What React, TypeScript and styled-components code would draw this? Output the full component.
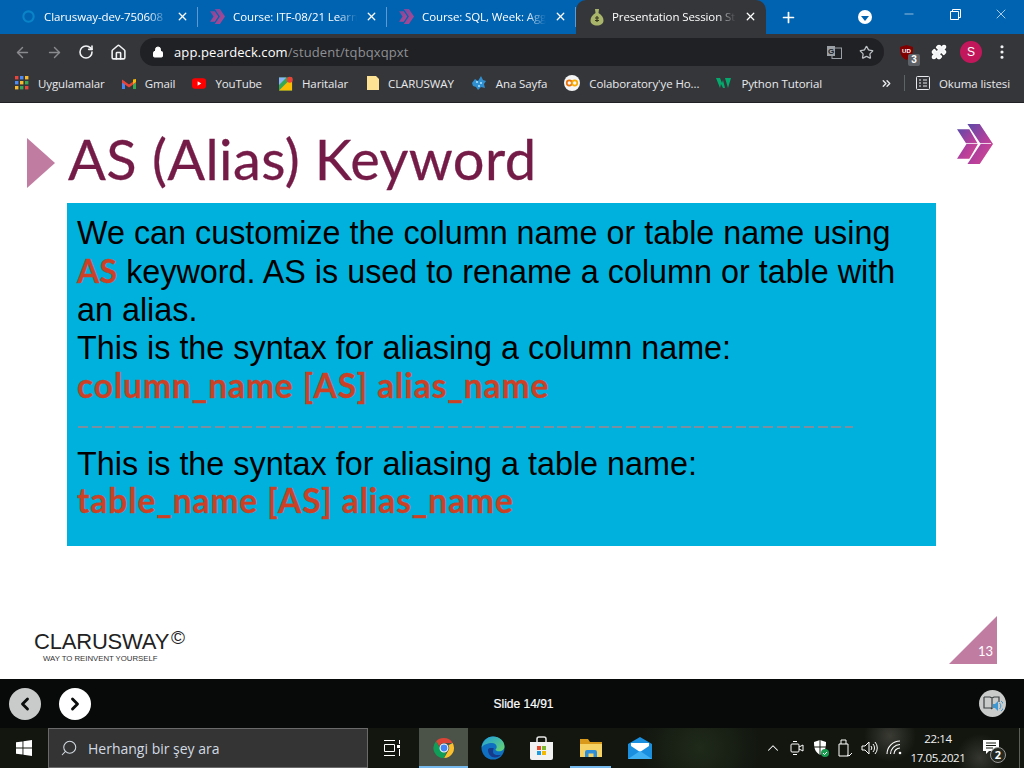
import React from 'react';
import styled, { createGlobalStyle } from 'styled-components';
import { ArrowLeft, ArrowRight, RotateCw, Home, Lock, Star, Puzzle, X, Plus, Minus, Search, ChevronLeft, ChevronRight, ChevronUp, ChevronsRight, MoreVertical } from 'lucide-react';

const Global = createGlobalStyle`
  html, body { margin: 0; padding: 0; background: #fff; }
  * { box-sizing: border-box; }
  body { font-family: "Liberation Sans", Arial, sans-serif; overflow: hidden; }
`;

const Screen = styled.div`
  width: 1024px;
  height: 768px;
  display: flex;
  flex-direction: column;
  overflow: hidden;
`;

const TabStrip = styled.div`
  height: 34px;
  background: #0063b1;
  display: flex;
  align-items: flex-end;
  padding-left: 9px;
  flex: none;
`;

const Tab = styled.div<{ $active?: boolean }>`
  width: ${({ $active }) => ($active ? '190px' : '188px')};
  height: 34px;
  display: flex;
  align-items: center;
  padding: ${({ $active }) => ($active ? '0 9px 1px 14px' : '0 8px 1px 12px')};
  gap: 8px;
  color: #fff;
  font-family: "Open Sans", sans-serif;
  font-size: 11.5px;
  letter-spacing: -0.1px;
  background: ${({ $active }) => ($active ? '#35363a' : 'transparent')};
  border-radius: ${({ $active }) => ($active ? '10px 10px 0 0' : '0')};
`;

const TabDivider = styled.div`
  width: 1px;
  height: 20px;
  background: #5c9ad0;
  margin-bottom: 7px;
  flex: none;
`;

const TabTitle = styled.span`
  flex: 1;
  min-width: 0;
  overflow: hidden;
  white-space: nowrap;
  -webkit-mask-image: linear-gradient(to right, #000 84%, transparent);
  mask-image: linear-gradient(to right, #000 84%, transparent);
`;

const NewTab = styled.div`
  width: 44px;
  height: 34px;
  display: flex;
  align-items: center;
  justify-content: center;
  color: #fff;
`;

const Spacer = styled.div`
  flex: 1;
`;

const WindowButton = styled.div`
  width: 46px;
  height: 28px;
  align-self: flex-start;
  display: flex;
  align-items: center;
  justify-content: center;
  color: #fff;
`;

const ProfileDrop = styled.div`
  width: 14px;
  height: 14px;
  border-radius: 50%;
  background: #fff;
  display: flex;
  align-items: center;
  justify-content: center;
  margin-right: 14px;
  align-self: center;
  &::after {
    content: '';
    border-left: 4px solid transparent;
    border-right: 4px solid transparent;
    border-top: 5px solid #0063b1;
    margin-top: 2px;
  }
`;

const Toolbar = styled.div`
  height: 36px;
  background: #35363a;
  display: flex;
  align-items: center;
  padding: 0 0 0 14px;
  color: #fff;
  flex: none;
`;

const NavIcon = styled.div<{ $dim?: boolean }>`
  width: 32px;
  height: 24px;
  display: flex;
  align-items: center;
  color: ${({ $dim }) => ($dim ? '#8a8b8e' : '#f1f3f4')};
`;

const Omnibox = styled.div`
  width: 744px;
  height: 28px;
  margin-left: -2px;
  border-radius: 14px;
  background: #202124;
  display: flex;
  align-items: center;
  padding: 0 10px 0 12px;
  font-family: "Open Sans", sans-serif;
  font-size: 13px;
  color: #fff;
`;

const Url = styled.span`
  margin-left: 10px;
  letter-spacing: 0.1px;
  span {
    color: #8f9094;
  }
`;

const Translate = styled.div`
  margin-right: 17px;
  display: flex;
`;

const ExtensionRow = styled.div`
  display: flex;
  align-items: center;
  margin-left: 15px;
`;

const UBlock = styled.div`
  width: 26px;
  height: 24px;
  position: relative;
  margin-right: 6px;
  display: flex;
  align-items: center;
`;

const Badge = styled.span`
  position: absolute;
  right: 5px;
  bottom: -2px;
  width: 12px;
  height: 12px;
  background: #5f6368;
  border-radius: 2px;
  color: #fff;
  font-size: 10px;
  font-weight: bold;
  line-height: 12px;
  text-align: center;
`;

const Avatar = styled.div`
  width: 22px;
  height: 22px;
  border-radius: 50%;
  background: #c2185b;
  color: #fff;
  font-size: 12px;
  margin-left: 13px;
  display: flex;
  align-items: center;
  justify-content: center;
`;

const MenuDots = styled.div`
  margin-left: 11px;
  display: flex;
  color: #f1f3f4;
`;

const Bookmarks = styled.div`
  height: 33px;
  background: #35363a;
  border-bottom: 1px solid #202124;
  display: flex;
  align-items: center;
  padding: 0 0 6px 15px;
  color: #e8eaed;
  font-family: "Open Sans", sans-serif;
  font-size: 11.5px;
  letter-spacing: -0.1px;
  flex: none;
`;

const Bookmark = styled.div<{ $gap: number }>`
  display: flex;
  align-items: center;
  gap: 9px;
  margin-right: ${({ $gap }) => $gap}px;
  white-space: nowrap;
`;

const BarDivider = styled.div`
  width: 1px;
  height: 16px;
  background: #5f6368;
  margin: 0 11px;
`;

const Slide = styled.main`
  flex: 1;
  background: #fff;
  display: flex;
  flex-direction: column;
  padding: 0 27px 15px 27px;
  min-height: 0;
`;

const TitleRow = styled.div`
  height: 100px;
  display: flex;
  align-items: center;
  padding-top: 12px;
`;

const TitleArrow = styled.div`
  width: 0;
  height: 0;
  border-top: 25px solid transparent;
  border-bottom: 25px solid transparent;
  border-left: 28px solid #c17ca2;
  margin-top: 8px;
  flex: none;
`;

const Title = styled.h1`
  margin: 0 0 0 13px;
  font-family: Lato, sans-serif;
  font-weight: 400;
  font-size: 56px;
  line-height: 64px;
  color: #741b47;
  letter-spacing: 0.42px;
  -webkit-text-stroke: 0.3px #741b47;
  white-space: nowrap;
`;

const LogoMark = styled.svg`
  margin-left: auto;
  margin-right: 4px;
  margin-top: -31px;
  flex: none;
`;

const Panel = styled.section`
  width: 869px;
  height: 343px;
  margin-left: 40px;
  background: #00b1dd;
  padding: 11.2px 10px 0;
  font-size: 32.33px;
  line-height: 38.4px;
  color: #000;
`;

const Line = styled.div`
  white-space: nowrap;
`;

const Red = styled.span<{ $lead?: boolean }>`
  color: #cc4125;
  font-family: Lato, sans-serif;
  font-weight: 700;
  font-size: ${({ $lead }) => ($lead ? '32px' : '33.5px')};
  line-height: 0;
  letter-spacing: ${({ $lead }) => ($lead ? '0.2px' : '0.9px')};
  -webkit-text-stroke: 0.3px #cc4125;
`;

const Rule = styled.div`
  height: 38.4px;
  display: flex;
  align-items: center;
  padding-left: 1px;
  &::after {
    content: '';
    width: 775px;
    height: 2px;
    margin-top: 3px;
    background: repeating-linear-gradient(to right, #7d8e9e 0 10px, transparent 10px 13.7px);
  }
`;

const SlideFooter = styled.div`
  margin-top: auto;
  display: flex;
  align-items: flex-end;
  justify-content: space-between;
`;

const Brand = styled.div`
  margin: 0 0 0 7px;
  color: #222;
`;

const BrandName = styled.div`
  font-family: "Liberation Sans", sans-serif;
  font-size: 22px;
  line-height: 24px;
  letter-spacing: -0.2px;
  position: relative;
  top: 1px;
  sup {
    font-size: 19px;
    line-height: 0;
    vertical-align: 5px;
    margin-left: 2px;
    font-weight: 400;
  }
`;

const BrandTag = styled.div`
  font-size: 7.8px;
  line-height: 11px;
  margin-left: 9px;
  color: #333;
  letter-spacing: -0.02px;
`;

const PageTriangle = styled.div`
  width: 48px;
  height: 48px;
  background: #c17ca2;
  clip-path: polygon(100% 0, 100% 100%, 0 100%);
  display: flex;
  align-items: flex-end;
  justify-content: flex-end;
  color: #fff;
  font-family: Lato, sans-serif;
  font-size: 13px;
  line-height: 26px;
  padding-right: 4px;
`;

const PlayerBar = styled.div`
  height: 49px;
  background: #080a0a;
  display: flex;
  align-items: center;
  padding: 0 18px 0 9px;
  color: #fff;
  font-size: 12px;
  flex: none;
`;

const RoundButton = styled.div<{ $muted?: boolean }>`
  width: 32px;
  height: 32px;
  border-radius: 50%;
  background: ${({ $muted }) => ($muted ? '#c9cbcb' : '#fff')};
  color: #0b0d0d;
  display: flex;
  align-items: center;
  justify-content: center;
  margin-right: 18px;
  flex: none;
`;

const SlideCount = styled.div`
  flex: 1;
  margin-right: 41px;
  padding-top: 1px;
  line-height: 15px;
  text-align: center;
  font-size: 12px;
  -webkit-text-stroke: 0.2px #fff;
`;

const ReadButton = styled.div`
  width: 27px;
  height: 27px;
  border-radius: 50%;
  background: #c9cbcb;
  display: flex;
  align-items: center;
  justify-content: center;
`;

const Taskbar = styled.div`
  height: 40px;
  background:
    radial-gradient(circle at 890px 8px, #3a3c34 0, transparent 26px),
    radial-gradient(circle at 980px 30px, #34362f 0, transparent 24px),
    radial-gradient(circle at 700px 20px, #1f2a1a 0, transparent 60px),
    #12160f;
  display: flex;
  align-items: center;
  color: #fff;
  font-family: "Open Sans", sans-serif;
  flex: none;
`;

const StartButton = styled.div`
  width: 48px;
  height: 40px;
  display: flex;
  align-items: center;
  justify-content: center;
`;

const SearchBox = styled.div`
  width: 320px;
  height: 40px;
  background: #343434;
  border: 1px solid #6a6a6a;
  display: flex;
  align-items: center;
  padding-left: 11px;
  gap: 10px;
  color: #d2dae2;
  font-size: 14px;
`;

const SearchGlass = styled(Search)`
  transform: scaleX(-1);
`;

const TaskItem = styled.div<{ $active?: boolean; $running?: boolean; $wide?: boolean }>`
  width: ${({ $wide }) => ($wide ? '51px' : '49px')};
  height: 40px;
  display: flex;
  align-items: center;
  justify-content: center;
  padding-right: ${({ $wide }) => ($wide ? '3px' : '0')};
  background: ${({ $active }) => ($active ? '#4b5247' : 'transparent')};
  position: relative;
  &::after {
    content: '';
    display: ${({ $active, $running }) => ($active || $running ? 'block' : 'none')};
    position: absolute;
    bottom: 0;
    left: ${({ $running }) => ($running ? '4px' : '0')};
    right: ${({ $running }) => ($running ? '4px' : '0')};
    height: 2px;
    background: #76b9ed;
  }
`;

const Tray = styled.div`
  margin-left: auto;
  display: flex;
  align-items: center;
  height: 40px;
`;

const TrayIcon = styled.div<{ $w: number }>`
  width: ${({ $w }) => $w}px;
  display: flex;
  align-items: center;
  justify-content: center;
`;

const Clock = styled.div`
  width: 64px;
  text-align: center;
  font-size: 11.5px;
  letter-spacing: -0.35px;
  line-height: 19px;
  color: #f2f2f2;
`;

const Notify = styled.div`
  width: 42px;
  height: 40px;
  position: relative;
  display: flex;
  align-items: center;
  justify-content: center;
  padding-bottom: 3px;
`;

const NotifyCount = styled.span`
  position: absolute;
  right: 6px;
  bottom: 5px;
  width: 16px;
  height: 16px;
  border-radius: 50%;
  border: 1px solid #999;
  background: #26291f;
  color: #fff;
  font-size: 11px;
  font-weight: bold;
  line-height: 14px;
  text-align: center;
`;

const DesktopEdge = styled.div`
  width: 1px;
  height: 40px;
  background: #5c5f58;
  margin: 0 4px 0 7px;
`;

const PurpleChevrons = () => (
  <svg width="15" height="15" viewBox="0 0 38 38">
    <defs>
      <linearGradient id="chev" x1="0" y1="0" x2="1" y2="1">
        <stop offset="0" stopColor="#7a4aa0" />
        <stop offset="1" stopColor="#b4478f" />
      </linearGradient>
    </defs>
    <path d="M0 6h12l9 13-9 13H0l9-13z" fill="url(#chev)" />
    <path d="M12 0h13l13 19-13 19H12l13-19z" fill="url(#chev)" />
  </svg>
);

const ChromeLogo = () => (
  <svg width="22" height="22" viewBox="0 0 24 24">
    <path d="M12 1a11 11 0 0 1 9.500 5.500H12a5.500 5.500 0 0 0-5.200 3.700L3.400 4.600A11 11 0 0 1 12 1z" fill="#db4437" />
    <path d="M21.500 6.500A11 11 0 0 1 12 23l4.700-8.100A5.500 5.500 0 0 0 16.800 9z" fill="#fbc02d" />
    <path d="M12 23A11 11 0 0 1 3.400 4.600l4.700 8.400a5.500 5.500 0 0 0 6.500 3.800z" fill="#0f9d58" />
    <circle cx="12" cy="12" r="4.300" fill="#4285f4" stroke="#fff" strokeWidth="1.200" />
  </svg>
);

const EdgeLogo = () => (
  <svg width="24" height="24" viewBox="0 0 24 24">
    <defs>
      <linearGradient id="edgeTop" x1="0" y1="0" x2="1" y2="1">
        <stop offset="0" stopColor="#1b9de2" />
        <stop offset="1" stopColor="#6ad66a" />
      </linearGradient>
    </defs>
    <circle cx="12" cy="12" r="11.500" fill="#0f6fc0" />
    <path d="M.6 11.500C1.500 5 6.500.5 12 .5c6.500 0 11.500 4.500 11.500 10 0 3-2.500 4.800-5.500 4.800-2 0-3.500-.6-3.500-1.500 0-.8 1.200-1 1.200-2.800C15.700 8.500 13.500 7 11 7c-4 0-8.500 1.500-10.400 4.500z" fill="url(#edgeTop)" />
    <path d="M7 14c0 4 3 7.500 7 7.500 2.500 0 4.500-1 6-2.800-3 .8-8 .5-8-3 0-2 1-3.200 1-3.200-3-1-6-.5-6 1.500z" fill="#173a8a" />
  </svg>
);

const StoreLogo = () => (
  <svg width="23" height="24" viewBox="0 0 23 24">
    <path d="M7 6V3a2 2 0 0 1 2-2h5a2 2 0 0 1 2 2v3" fill="none" stroke="#e6e6e6" strokeWidth="1.500" />
    <path d="M0 6h23v16a2 2 0 0 1-2 2H2a2 2 0 0 1-2-2z" fill="#f2f2f2" />
    <rect x="7" y="10" width="4" height="4" fill="#e74c2e" />
    <rect x="12" y="10" width="4" height="4" fill="#7cb82f" />
    <rect x="7" y="15" width="4" height="4" fill="#1f9be0" />
    <rect x="12" y="15" width="4" height="4" fill="#f5b800" />
  </svg>
);

const FolderLogo = () => (
  <svg width="22" height="18" viewBox="0 0 22 18">
    <path d="M0 0h8l2 3h12v15H0z" fill="#d99a1c" />
    <path d="M0 5h22v13H0z" fill="#f6d265" />
    <path d="M5 18v-5a2 2 0 0 1 2-2h8a2 2 0 0 1 2 2v5h-3.500v-3.500h-5V18z" fill="#2f8ed8" />
  </svg>
);

const MailLogo = () => (
  <svg width="24" height="22" viewBox="0 0 24 22">
    <path d="M0 7l12-7 12 7v15H0z" fill="#1a8fe0" />
    <path d="M3 6h18v3l-9 6-9-6z" fill="#fff" />
    <path d="M0 22l12-8 12 8z" fill="#3fb0f2" />
  </svg>
);

const PearIcon = () => (
  <svg width="14" height="18" viewBox="0 0 14 18">
    <path d="M5 1h4L8.500 5c3 1.500 5 4.500 5 7.500 0 3.500-3 5-6.500 5s-6.500-1.500-6.500-5C.5 9.500 2.500 6.500 5.500 5z" fill="#a9b56a" />
    <path d="M7 8v6M5 10h4M5 12.500h4" stroke="#37391f" strokeWidth="1.200" />
  </svg>
);

const WifiIcon = () => (
  <svg width="16" height="16" viewBox="0 0 16 16">
    <g transform="translate(16 0) scale(-1 1)">
      <circle cx="2" cy="13" r="1.300" fill="#fff" />
      <path d="M2 8a6 6 0 0 1 6 6M2 4.500a9.500 9.500 0 0 1 9.500 9.500M2 1a13 13 0 0 1 13 13" fill="none" stroke="#fff" strokeWidth="1.100" />
    </g>
  </svg>
);

const appColors = ['#e8453c', '#4c8bf5', '#f9bb2d', '#3aa757'];

const tabs = [
  { title: 'Clarusway-dev-750608', icon: <svg width="15" height="15" viewBox="0 0 16 16"><circle cx="8" cy="8" r="5.500" fill="none" stroke="#0a84c9" strokeWidth="2.200" /></svg> },
  { title: 'Course: ITF-08/21 Learn', icon: <PurpleChevrons /> },
  { title: 'Course: SQL, Week: Agg', icon: <PurpleChevrons /> },
];

function App(): JSX.Element {
  return (
    <Screen>
      <Global />
      <TabStrip>
        {tabs.map((t) => (
          <React.Fragment key={t.title}>
            <Tab>
              {t.icon}
              <TabTitle>{t.title}</TabTitle>
              <X size={13} strokeWidth={2.4} />
            </Tab>
            <TabDivider />
          </React.Fragment>
        ))}
        <Tab $active>
          <PearIcon />
          <TabTitle>Presentation Session St</TabTitle>
          <X size={13} strokeWidth={2.4} />
        </Tab>
        <NewTab>
          <Plus size={17} strokeWidth={2.4} />
        </NewTab>
        <Spacer />
        <ProfileDrop />
        <WindowButton><Minus size={14} strokeWidth={1} /></WindowButton>
        <WindowButton>
          <svg width="11" height="11" viewBox="0 0 11 11" fill="none" stroke="#fff">
            <path d="M.5 2.500h8v8h-8zM2.500 2.500v-2h8v8h-2" />
          </svg>
        </WindowButton>
        <WindowButton><X size={16} strokeWidth={1} /></WindowButton>
      </TabStrip>

      <Toolbar>
        <NavIcon $dim><ArrowLeft size={17} /></NavIcon>
        <NavIcon $dim><ArrowRight size={17} /></NavIcon>
        <NavIcon><RotateCw size={16} strokeWidth={2.4} /></NavIcon>
        <NavIcon><Home size={17} strokeWidth={2.2} /></NavIcon>
        <Omnibox>
          <Lock size={12} fill="#fff" />
          <Url>app.peardeck.com<span>/student/tqbqxqpxt</span></Url>
          <Spacer />
          <Translate>
            <svg width="15" height="13" viewBox="0 0 15 13">
              <rect x="5" y="2" width="9.500" height="10.500" fill="none" stroke="#9aa0a6" />
              <rect width="8" height="10" fill="#9aa0a6" />
              <text x="4" y="8" fontSize="8" fontWeight="bold" textAnchor="middle" fill="#202124" fontFamily="Liberation Sans">G</text>
            </svg>
          </Translate>
          <Star size={15} color="#bdc1c6" />
        </Omnibox>
        <ExtensionRow>
          <UBlock>
            <svg width="15" height="17" viewBox="0 0 16 18">
              <path d="M8 1l7 2c0 7-1 11-7 14C2 14 1 10 1 3z" fill="#800000" />
              <text x="8" y="10" fontSize="6.500" fontWeight="bold" textAnchor="middle" fill="#fff" fontFamily="Liberation Sans">UD</text>
            </svg>
            <Badge>3</Badge>
          </UBlock>
          <Puzzle size={16} fill="#f1f3f4" />
          <Avatar>S</Avatar>
          <MenuDots><MoreVertical size={18} strokeWidth={2.2} /></MenuDots>
        </ExtensionRow>
      </Toolbar>

      <Bookmarks>
        <Bookmark $gap={17}>
          <svg width="14" height="14" viewBox="0 0 14 14">
            {[0, 1, 2].flatMap((r) =>
              [0, 1, 2].map((c) => (
                <rect key={`${r}${c}`} x={c * 5} y={r * 5} width="3.400" height="3.400" fill={appColors[(r + c) % 4]} />
              ))
            )}
          </svg>
          Uygulamalar
        </Bookmark>
        <Bookmark $gap={17}>
          <svg width="14" height="11" viewBox="0 0 14 11">
            <path d="M0 2v9h3V4z" fill="#4285f4" />
            <path d="M14 2v9h-3V4z" fill="#34a853" />
            <path d="M0 1.500l7 5 7-5v3l-7 5-7-5z" fill="#ea4335" />
            <path d="M11 1.500L14 1v3l-3 2z" fill="#fbbc04" />
          </svg>
          Gmail
        </Bookmark>
        <Bookmark $gap={17}>
          <svg width="14" height="11" viewBox="0 0 15 11">
            <rect width="15" height="11" rx="3" fill="#f00" />
            <path d="M6 3l4 2.500L6 8z" fill="#fff" />
          </svg>
          YouTube
        </Bookmark>
        <Bookmark $gap={19}>
          <svg width="14" height="15" viewBox="0 0 15 15">
            <rect y="1" width="14" height="14" fill="#34a853" />
            <path d="M0 15L14 1v14z" fill="#fbbc04" />
            <path d="M0 1h8L0 9z" fill="#8ab4f8" />
            <circle cx="11.500" cy="3.500" r="3.200" fill="#ea4335" />
          </svg>
          Haritalar
        </Bookmark>
        <Bookmark $gap={17}>
          <svg width="12" height="14" viewBox="0 0 12 14">
            <path d="M0 0h9l3 3v11H0z" fill="#fde293" />
          </svg>
          CLARUSWAY
        </Bookmark>
        <Bookmark $gap={17}>
          <svg width="16" height="16" viewBox="0 0 16 16" fill="#2f8fd0">
            <path d="M1 8l3-4 3 2 3-5 2 4 3 1-2 3 1 4-4-1-3 3-2-3-3-1z" />
            <path d="M5 6h2v2H5zM9 7h2v2H9zM7 10h2v2H7z" fill="#8fd0f5" />
          </svg>
          Ana Sayfa
        </Bookmark>
        <Bookmark $gap={17}>
          <svg width="16" height="16" viewBox="0 0 16 16">
            <circle cx="8" cy="8" r="8" fill="#f5f5f5" />
            <circle cx="5.300" cy="8" r="2.600" fill="none" stroke="#e8710a" strokeWidth="1.700" />
            <circle cx="10.700" cy="8" r="2.600" fill="none" stroke="#f9ab00" strokeWidth="1.700" />
          </svg>
          Colaboratory'ye Ho...
        </Bookmark>
        <Bookmark $gap={0}>
          <svg width="16" height="12" viewBox="0 0 16 12" fill="#04aa6d">
            <path d="M0 1h4l2 5 1-3 2 8H7L5 7l-1 4zM9 1h6l-3 10z" />
          </svg>
          Python Tutorial
        </Bookmark>
        <Spacer />
        <ChevronsRight size={13} strokeWidth={2.6} />
        <BarDivider />
        <Bookmark $gap={14}>
          <svg width="14" height="14" viewBox="0 0 14 14" fill="none" stroke="#e8eaed">
            <rect x=".5" y=".5" width="13" height="13" rx="1" />
            <path d="M3 4h2M7 4h4M3 7h2M7 7h4M3 10h2M7 10h4" />
          </svg>
          Okuma listesi
        </Bookmark>
      </Bookmarks>

      <Slide>
        <TitleRow>
          <TitleArrow />
          <Title>AS (Alias) Keyword</Title>
          <LogoMark width="36" height="40" viewBox="0 0 38 38" preserveAspectRatio="none">
            <defs>
              <linearGradient id="mark" x1="0" y1="0" x2="1" y2="1">
                <stop offset="0" stopColor="#5b4aa8" />
                <stop offset="0.55" stopColor="#b33f9c" />
                <stop offset="1" stopColor="#d8488e" />
              </linearGradient>
            </defs>
            <path d="M0 5h13l9 14-9 14H0l10-14z" fill="url(#mark)" />
            <path d="M11 0h13l14 19-14 19H11l14-19z" fill="url(#mark)" />
            <path d="M8 18.500h28" stroke="#fff" strokeWidth=".8" />
          </LogoMark>
        </TitleRow>

        <Panel>
          <Line>We can customize the column name or table name using</Line>
          <Line><Red $lead>AS</Red> keyword. AS is used to rename a column or table with</Line>
          <Line>an alias.</Line>
          <Line>This is the syntax for aliasing a column name:</Line>
          <Line><Red>column_name [AS] alias_name</Red></Line>
          <Rule />
          <Line>This is the syntax for aliasing a table name:</Line>
          <Line><Red>table_name [AS] alias_name</Red></Line>
        </Panel>

        <SlideFooter>
          <Brand>
            <BrandName>CLARUSWAY<sup>©</sup></BrandName>
            <BrandTag>WAY TO REINVENT YOURSELF</BrandTag>
          </Brand>
          <PageTriangle>13</PageTriangle>
        </SlideFooter>
      </Slide>

      <PlayerBar>
        <RoundButton $muted><ChevronLeft size={20} strokeWidth={3.4} /></RoundButton>
        <RoundButton><ChevronRight size={20} strokeWidth={3.4} /></RoundButton>
        <SlideCount>Slide 14/91</SlideCount>
        <ReadButton>
          <svg width="20" height="18" viewBox="0 0 20 18" fill="none">
            <path d="M1 2h6l2 1 2-1h5v5M9 3v11M1 2v11h7l1 1" stroke="#3c4041" strokeWidth="1.200" />
            <path d="M10 9h2l3-3v10l-3-3h-2z" fill="#3d97d3" />
            <path d="M16.500 8a4 4 0 0 1 0 6M18 6a6 6 0 0 1 0 10" stroke="#3d97d3" />
          </svg>
        </ReadButton>
      </PlayerBar>

      <Taskbar>
        <StartButton>
          <svg width="16" height="16" viewBox="0 0 16 16" fill="#fff">
            <path d="M0 2.300l6.500-.9v6.200H0zM7.400 1.300L16 0v7.600H7.400zM0 8.400h6.500v6.200L0 13.700zM7.400 8.400H16V16l-8.600-1.300z" />
          </svg>
        </StartButton>
        <SearchBox>
          <SearchGlass size={18} strokeWidth={1.4} />
          Herhangi bir şey ara
        </SearchBox>
        <TaskItem $wide>
          <svg width="16" height="16" viewBox="0 0 16 16" fill="none" stroke="#fff">
            <path d="M0 .5h11M0 15.500h11M.5 4.500h10v7H.5zM15.500 0v4M15.500 9v7" />
            <rect x="13" y="5" width="3" height="3" fill="#fff" stroke="none" />
          </svg>
        </TaskItem>
        <TaskItem $active><ChromeLogo /></TaskItem>
        <TaskItem><EdgeLogo /></TaskItem>
        <TaskItem><StoreLogo /></TaskItem>
        <TaskItem $running><FolderLogo /></TaskItem>
        <TaskItem><MailLogo /></TaskItem>
        <Tray>
          <TrayIcon $w={24}><ChevronUp size={18} strokeWidth={1.4} color="#fff" /></TrayIcon>
          <TrayIcon $w={24}>
            <svg width="14" height="16" viewBox="0 0 14 16" fill="none" stroke="#fff">
              <rect x="1" y="4" width="8" height="8" rx="1" />
              <path d="M9 7l4-2v6l-4-2M3 1.500h4M3 14.500h4" />
            </svg>
          </TrayIcon>
          <TrayIcon $w={24}>
            <svg width="16" height="18" viewBox="0 0 16 18">
              <path d="M7 1L1 3c0 6 1 10 6 13 5-3 6-7 6-13z" fill="#fff" />
              <path d="M7 1v15M1 8h12" stroke="#161a13" />
              <circle cx="12" cy="14" r="4" fill="#1a9c50" />
              <path d="M10 14l1.500 1.500L14 13" stroke="#fff" fill="none" />
            </svg>
          </TrayIcon>
          <TrayIcon $w={24}>
            <svg width="14" height="18" viewBox="0 0 14 18" fill="none" stroke="#fff">
              <path d="M3 5V1h5v4M1 5h9v12H1zM9 16l2 1 3-3" />
            </svg>
          </TrayIcon>
          <TrayIcon $w={25}>
            <svg width="17" height="14" viewBox="0 0 17 14" fill="none" stroke="#fff">
              <path d="M1 5h3l4-4v12L4 9H1zM10 5a3 3 0 0 1 0 4M12 3a6 6 0 0 1 0 8M14 1a9 9 0 0 1 0 12" />
            </svg>
          </TrayIcon>
          <TrayIcon $w={24}><WifiIcon /></TrayIcon>
          <Clock>22:14<br />17.05.2021</Clock>
          <Notify>
            <svg width="16" height="14" viewBox="0 0 16 14" fill="#fff">
              <path d="M0 0h16v11H6l-3 3v-3H0z" />
              <path d="M3 3h10M3 5.500h10M3 8h7" stroke="#161a13" />
            </svg>
            <NotifyCount>2</NotifyCount>
          </Notify>
          <DesktopEdge />
        </Tray>
      </Taskbar>
    </Screen>
  );
}

export default App;
